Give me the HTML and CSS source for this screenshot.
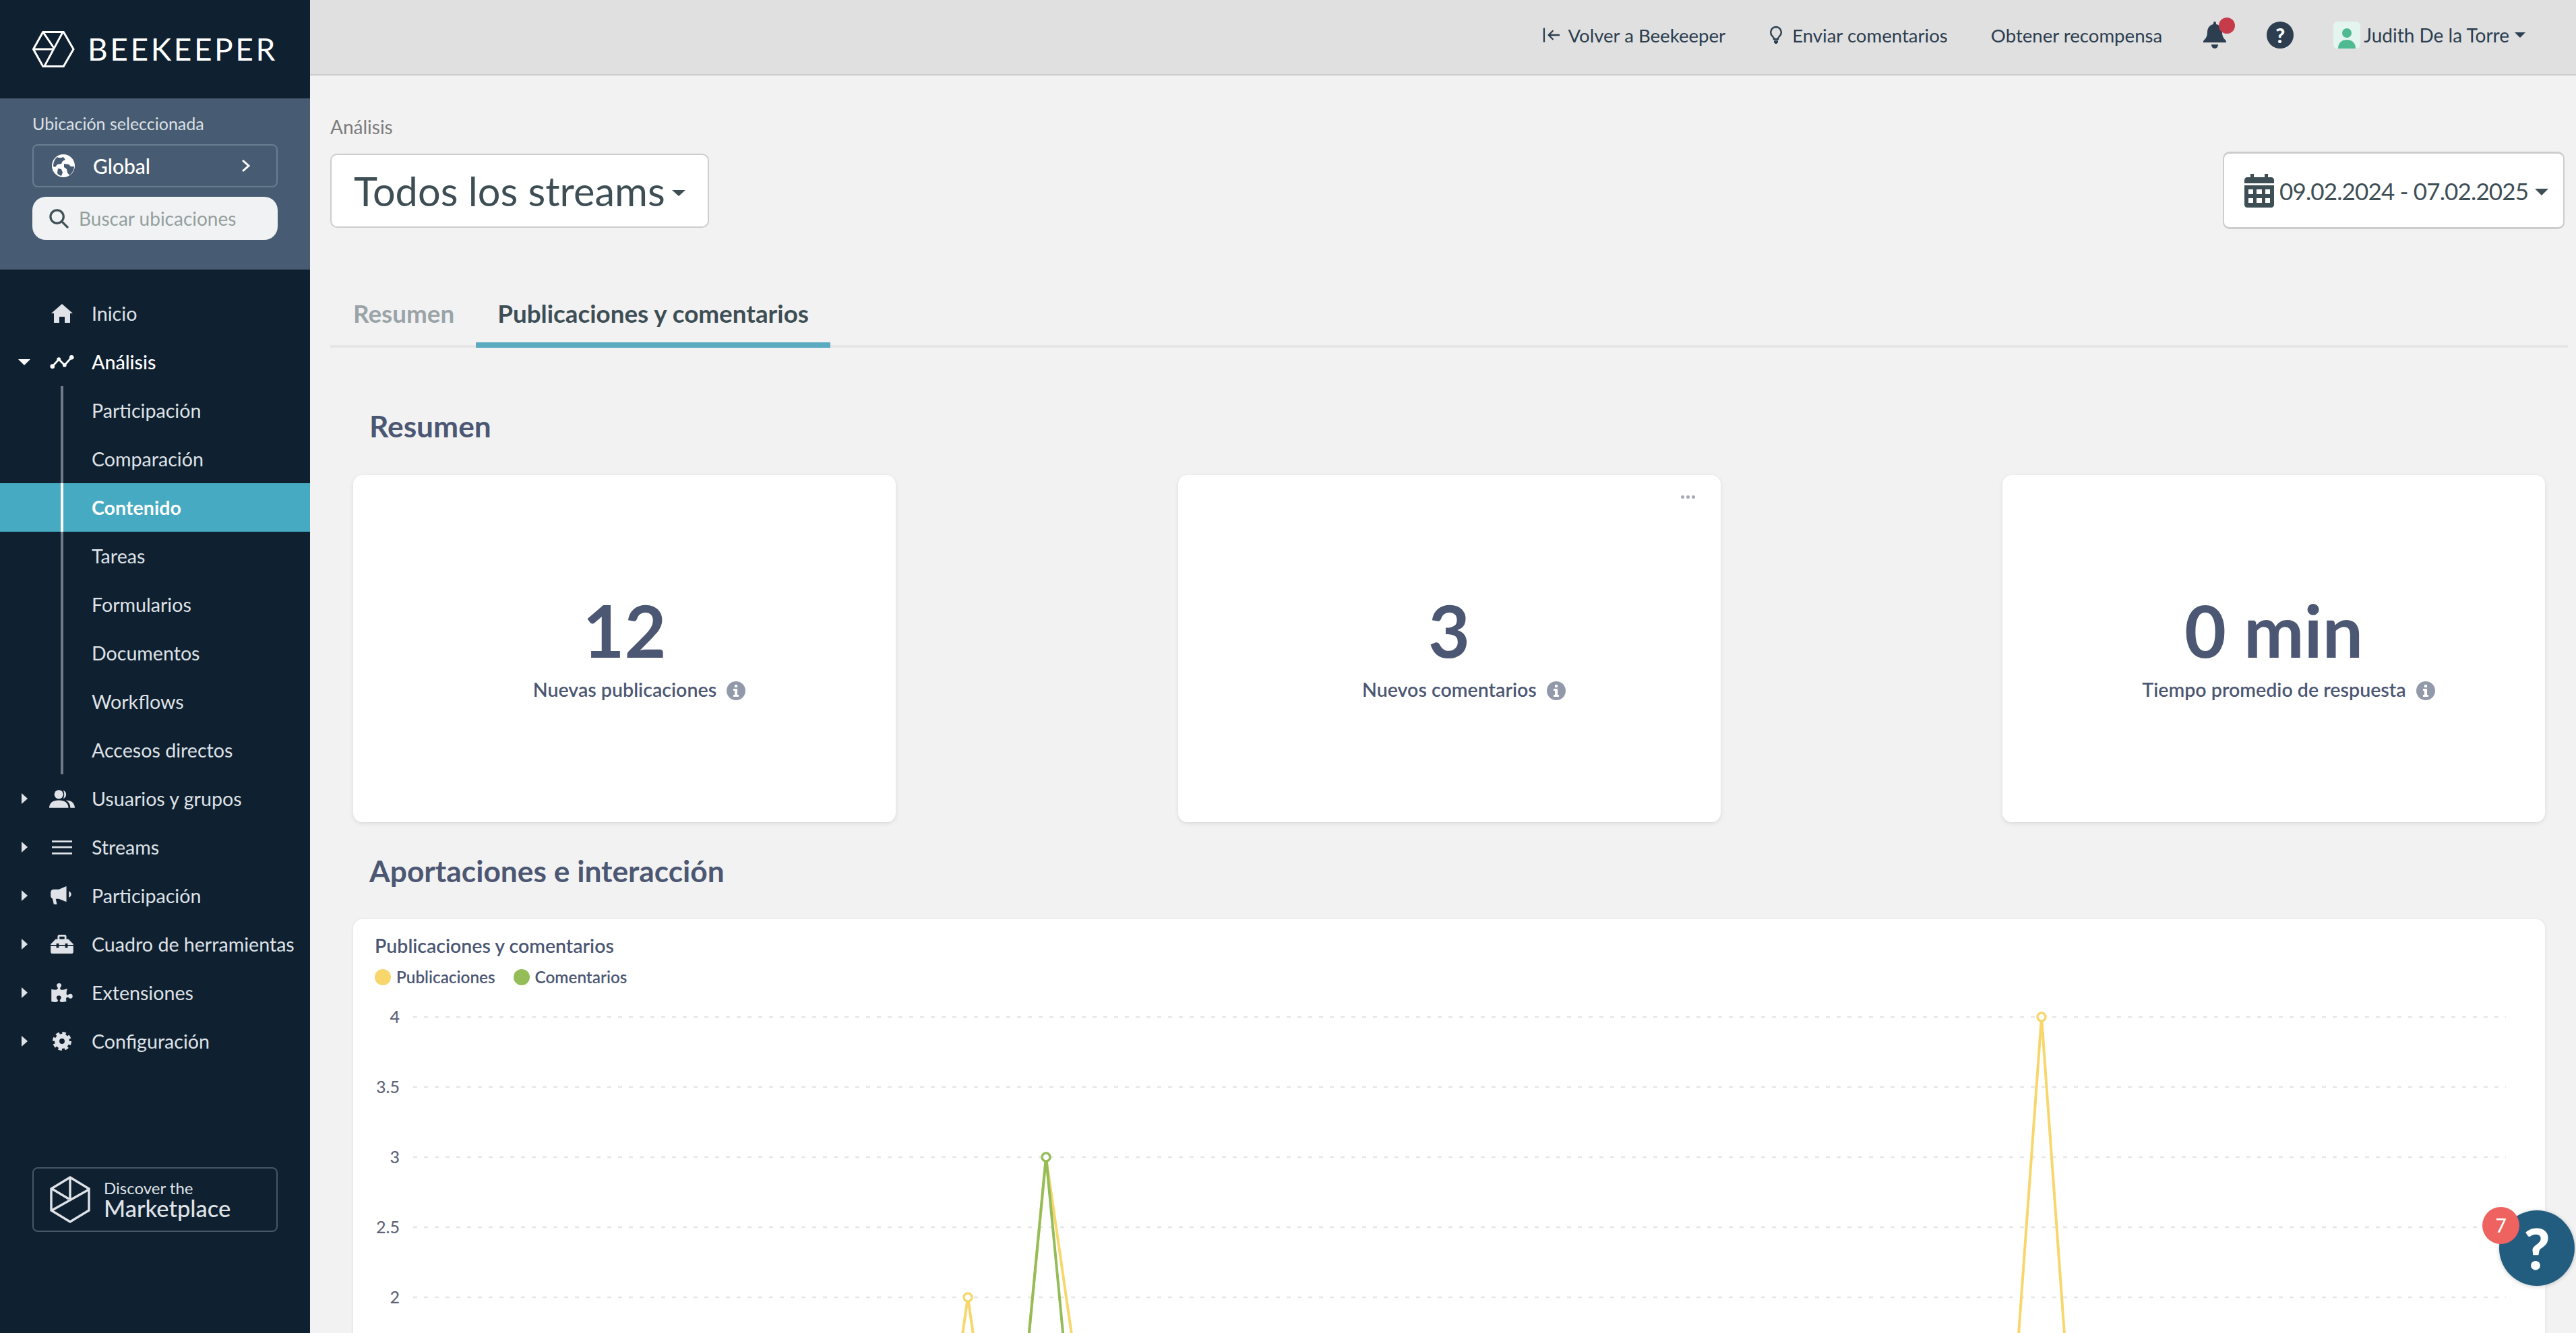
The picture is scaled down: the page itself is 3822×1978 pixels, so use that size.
FILE: index.html
```html
<!DOCTYPE html>
<html lang="es">
<head>
<meta charset="utf-8">
<title>Análisis</title>
<link rel="stylesheet" href="styles.css">
</head>
<body>
<div class="app">
  <aside class="sidebar">
    <div class="brand">
      <svg class="brand-logo" viewBox="0 0 64 56"><path d="M1.5 28 16 2h31l15 26-15 26H16zM16 2l17 25M46 2 18 54M2 28h30"/></svg>
      <span class="brand-name">BEEKEEPER</span>
    </div>
    <div class="location">
      <div class="location-label">Ubicación seleccionada</div>
      <div class="location-btn">
        <svg class="globe" viewBox="0 0 34 34"><circle cx="17" cy="17" r="17" fill="#fff"/><path class="cut" d="M8 4c3 2 7 1 9 0l3 4-4 2-2 4-6 1-3 4-3-1C2 12 4 7 8 4zM18 14l7 1 3 3 5 0c0 5-3 10-7 13l-3-4-1-5-4-3zM9 21l5 1 2 5-2 5c-4-1-6-3-6-5z"/></svg>
        <span class="global-name">Global</span>
        <svg class="chev" viewBox="0 0 14 20"><path d="M2 2l9 8-9 8"/></svg>
      </div>
      <div class="search">
        <svg class="search-ico" viewBox="0 0 30 30"><circle cx="12" cy="12" r="10"/><path d="M19 19l10 10"/></svg>
        <span>Buscar ubicaciones</span>
      </div>
    </div>
    <nav class="nav">
      <a class="row"><i></i><svg class="ico" viewBox="0 0 32 28"><path d="M16 0l16 14h-4v14h-8v-9h-8v9H4V14H0z"/></svg><span>Inicio</span></a>
      <a class="row open"><i class="caret-down"></i><svg class="ico" viewBox="0 0 38 22"><path class="ln" d="M4 18l10-11 9 9L34 4"/><circle cx="4" cy="18" r="3.5"/><circle cx="14" cy="7" r="3"/><circle cx="23" cy="16" r="3"/><circle cx="34" cy="4" r="3.5"/></svg><span>Análisis</span></a>
      <a class="row sub"><i></i><b></b><span>Participación</span></a>
      <a class="row sub"><i></i><b></b><span>Comparación</span></a>
      <a class="row sub active"><i></i><b></b><span>Contenido</span></a>
      <a class="row sub"><i></i><b></b><span>Tareas</span></a>
      <a class="row sub"><i></i><b></b><span>Formularios</span></a>
      <a class="row sub"><i></i><b></b><span>Documentos</span></a>
      <a class="row sub"><i></i><b></b><span>Workflows</span></a>
      <a class="row sub"><i></i><b></b><span>Accesos directos</span></a>
      <a class="row"><i class="caret-right"></i><svg class="ico ico-users" viewBox="0 0 40 28"><circle cx="15" cy="7" r="7"/><path d="M0 28c0-8 6-12 15-12s15 4 15 12z"/><path d="M22 0.5a7 7 0 0 1 0 13c2-4 2-9 0-13zM26 16c8 0 14 4 14 12h-7c0-5-2-9-7-12z"/></svg><span>Usuarios y grupos</span></a>
      <a class="row"><i class="caret-right"></i><svg class="ico ico-bars" viewBox="0 0 32 22"><path d="M0 0h32v3H0zM0 9h32v3H0zM0 19h32v3H0z"/></svg><span>Streams</span></a>
      <a class="row"><i class="caret-right"></i><svg class="ico" viewBox="0 0 36 30"><path d="M25 0v25L13 20H8l2 9H5l-2-9c-2-1-3-3-3-5V10c0-3 2-5 5-5h8zM29 8c5 2 5 8 0 10z"/></svg><span>Participación</span></a>
      <a class="row"><i class="caret-right"></i><svg class="ico" viewBox="0 0 36 30"><path d="M11 7V3c0-2 1-3 3-3h8c2 0 3 1 3 3v4h3l8 8v1H27v-2h-4v2H13v-2H9v2H0v-1l8-8zM14 3v4h8V3zM0 18h9v3h4v-3h10v3h4v-3h9v9c0 2-1 3-3 3H3c-2 0-3-1-3-3z"/></svg><span>Cuadro de herramientas</span></a>
      <a class="row"><i class="caret-right"></i><svg class="ico" viewBox="0 0 576 512"><path d="M519.442 288.651c-41.519 0-59.5 31.593-82.058 31.593C377.409 320.244 432 144 432 144s-196.288 80-196.288-3.297c0-35.827 36.288-46.25 36.288-85.985C272 19.216 243.885 0 210.539 0c-34.654 0-66.366 18.891-66.366 56.346 0 41.364 31.711 59.277 31.711 81.75C175.885 207.719 0 166.758 0 166.758v333.237s178.635 41.047 178.635-28.662c0-22.473-40-40.107-40-81.471 0-37.456 29.25-56.346 63.577-56.346 33.673 0 61.788 19.216 61.788 54.717 0 39.735-36.288 50.158-36.288 85.985 0 60.803 129.675 25.73 181.23 25.73 0 0-34.725-120.101 25.827-120.101 35.962 0 46.423 36.152 86.308 36.152C556.712 416 576 387.99 576 354.443c0-34.199-18.962-65.792-56.558-65.792z"/></svg><span>Extensiones</span></a>
      <a class="row"><i class="caret-right"></i><svg class="ico" viewBox="0 0 32 32"><circle class="gear-teeth" cx="16" cy="16" r="13.5"/><circle class="gear-ring" cx="16" cy="16" r="8.5"/></svg><span>Configuración</span></a>
    </nav>
    <div class="market">
      <svg class="market-logo" viewBox="0 0 62 70"><path d="M31 2l28 17v32L31 68 3 51V19zM31 2v33M4 19l25 15M59 20L4 51"/></svg>
      <div class="market-text"><span class="m1">Discover the</span><span class="m2">Marketplace</span></div>
    </div>
  </aside>

  <main class="main">
    <header class="topbar">
      <a class="top-link link-back"><svg class="t-ico t-back" viewBox="0 0 28 24"><path d="M2 1v22M26 12H9M16 5l-7 7 7 7"/></svg>Volver a Beekeeper</a>
      <a class="top-link link-send"><svg class="t-ico t-bulb" viewBox="0 0 20 28"><path d="M10 2a8 8 0 0 0-5 14c1 1 2 3 2 4h6c0-1 1-3 2-4a8 8 0 0 0-5-14z"/><path class="fill" d="M7 22h6v3l-2 2H9l-2-2z"/></svg>Enviar comentarios</a>
      <a class="top-link">Obtener recompensa</a>
      <span class="bell"><svg viewBox="0 0 36 40"><path d="M18 0c2 0 2 2 2 4 6 1 9 6 9 12 0 8 4 10 6 13v2H1v-2c2-3 6-5 6-13 0-6 3-11 9-12 0-2 0-4 2-4zM13 34h10c0 3-2 6-5 6s-5-3-5-6z"/></svg><em></em></span>
      <span class="help-ico">?</span>
      <span class="user"><svg class="avatar" viewBox="0 0 40 40"><rect width="40" height="40" rx="6" fill="#e3f5ee"/><circle cx="20" cy="17" r="7" fill="#4fba91"/><path d="M7 40c0-9 6-13 13-13s13 4 13 13z" fill="#4fba91"/></svg>Judith De la Torre<i class="drop"></i></span>
    </header>

    <section class="page">
      <div class="crumb">Análisis</div>
      <div class="page-head">
        <div class="stream-btn">Todos los streams<i class="drop"></i></div>
        <div class="date-btn">
          <svg class="cal" viewBox="0 0 44 50"><path d="M9 0h5v7H9zM30 0h5v7h-5zM4 5h36c2 0 4 2 4 4v5H0V9c0-2 2-4 4-4zM0 17h44v29c0 2-2 4-4 4H4c-2 0-4-2-4-4z"/><path class="cal-w" d="M6 23h7v7H6zM18 23h8v7h-8zM31 23h7v7h-7zM6 36h7v7H6zM18 36h8v7h-8zM31 36h7v7h-7z"/></svg>
          <span class="date-text">09.02.2024 - 07.02.2025</span><i class="drop"></i>
        </div>
      </div>
      <div class="tabs">
        <a class="tab">Resumen</a>
        <a class="tab current">Publicaciones y comentarios</a>
      </div>
      <div class="dash">
        <h2 class="sec sec-first">Resumen</h2>
        <div class="kpis">
          <div class="kpi">
            <div class="num">12</div>
            <div class="lbl">Nuevas publicaciones <svg class="info" viewBox="0 0 28 28"><circle cx="14" cy="14" r="14"/><path class="w" d="M12 5h4v4h-4zM10 11h6v9h2v3h-8v-3h2v-6h-2z"/></svg></div>
          </div>
          <div class="kpi">
            <span class="dots"><u></u><u></u><u></u></span>
            <div class="num">3</div>
            <div class="lbl">Nuevos comentarios <svg class="info" viewBox="0 0 28 28"><circle cx="14" cy="14" r="14"/><path class="w" d="M12 5h4v4h-4zM10 11h6v9h2v3h-8v-3h2v-6h-2z"/></svg></div>
          </div>
          <div class="kpi">
            <div class="num">0 min</div>
            <div class="lbl">Tiempo promedio de respuesta <svg class="info" viewBox="0 0 28 28"><circle cx="14" cy="14" r="14"/><path class="w" d="M12 5h4v4h-4zM10 11h6v9h2v3h-8v-3h2v-6h-2z"/></svg></div>
          </div>
        </div>
        <h2 class="sec sec-second">Aportaciones e interacción</h2>
        <div class="chart-card">
          <div class="chart-title">Publicaciones y comentarios</div>
          <div class="legend">
            <span class="lg"><em class="yel"></em>Publicaciones</span>
            <span class="lg"><em class="grn"></em>Comentarios</span>
          </div>
          <svg class="chart" viewBox="0 0 3252 540" width="3252" height="540">
            <g class="grid">
              <path d="M89 39H3194M89 143H3194M89 247H3194M89 351H3194M89 455H3194"/>
            </g>
            <g class="axis">
              <text x="69" y="48">4</text>
              <text x="69" y="152">3.5</text>
              <text x="69" y="256">3</text>
              <text x="69" y="360">2.5</text>
              <text x="69" y="464">2</text>
            </g>
            <path class="line l-y" d="M852 871L912 455L972 871M968 871L1028 247L1088 663M2445 871L2505 39L2565 871"/>
            <path class="line l-g" d="M968 871L1028 247L1088 871"/>
            <circle class="pt p-y" cx="912" cy="455" r="6"/>
            <circle class="pt p-y" cx="2505" cy="39" r="6"/>
            <circle class="pt p-g" cx="1028" cy="247" r="6"/>
          </svg>
        </div>
      </div>
    </section>
  </main>
</div>
<div class="help-fab"><span class="q">?</span><span class="badge">7</span></div>
</body>
</html>
```

FILE: styles.css
```css
* { box-sizing: border-box; }
html, body { margin: 0; height: 100%; overflow: hidden; }
body { font-family: "Lato", "Noto Sans", sans-serif; background: #f2f2f2; color: #3e4e55; }
a { color: inherit; text-decoration: none; }
.app { display: flex; height: 1978px; }

/* sidebar */
.sidebar { width: 460px; flex: none; background: #0f2030; color: #dfe2e7; font-size: 28.6px; }
.brand { height: 146px; display: flex; align-items: center; padding-left: 48px; gap: 19px; }
.brand-logo { width: 63px; height: 56px; fill: none; stroke: #fff; stroke-width: 3; }
.brand-name { font-size: 46px; font-weight: 400; letter-spacing: 3.6px; color: #fff; line-height: 1; }
.location { height: 254px; background: #475c72; padding: 19px 48px 0; }
.location-label { font-size: 25px; line-height: 36px; color: #dde1e6; margin-bottom: 13px; }
.location-btn { height: 64px; border: 2px solid #6a7d90; border-radius: 8px; display: flex; align-items: center; padding-left: 27px; color: #fff; font-size: 30px; font-weight: 500; }
.globe { width: 34px; height: 34px; flex: none; }
.cut { fill: #475c72; }
.global-name { margin-left: 27px; flex: 1; }
.chev { width: 14px; height: 20px; fill: none; stroke: #fff; stroke-width: 3; margin-right: 38px; }
.search { height: 64px; margin-top: 14px; background: #f0f2f4; border-radius: 20px; display: flex; align-items: center; padding-left: 25px; gap: 15px; font-size: 28px; color: #949f9d; }
.search-ico { width: 29px; height: 29px; fill: none; stroke: #3f5056; stroke-width: 3.4; flex: none; }
.nav { margin-top: 29px; }
.row { height: 72px; display: grid; grid-template-columns: 72px 40px 1fr; align-items: center; position: relative; white-space: nowrap; }
.row span { padding-left: 24px; position: relative; }
.row i { justify-self: center; width: 0; height: 0; }
.caret-right { border-left: 9px solid #dfe2e7; border-top: 8px solid transparent; border-bottom: 8px solid transparent; }
.caret-down { border-top: 9px solid #fff; border-left: 9px solid transparent; border-right: 9px solid transparent; }
.ico { width: 34px; height: 28px; justify-self: center; fill: #dfe2e7; }
.ico-users { width: 38px; height: 27px; }
.ico-bars { width: 30px; height: 21px; }
.ln { fill: none; stroke: #fff; stroke-width: 3; }
.open { color: #fff; font-weight: 500; }
.open .ico { fill: #fff; width: 36px; height: 22px; }
.gear-teeth { fill: none; stroke: #dfe2e7; stroke-width: 5; stroke-dasharray: 6 4.6; }
.gear-ring { fill: none; stroke: #dfe2e7; stroke-width: 8; }
.row b { position: absolute; left: 90px; top: 0; bottom: 0; width: 4px; background: #6f7b88; }
.sub span { grid-column: 3; }
.active { background: #46aac2; color: #fff; font-weight: 700; }
.active b { background: #fff; }
.market { margin: 151px 48px 0; height: 96px; border: 2px solid #47566a; border-radius: 8px; display: flex; align-items: center; padding-left: 23px; gap: 19px; }
.market-logo { width: 62px; height: 70px; fill: none; stroke: #dfe2e7; stroke-width: 3.4; flex: none; }
.market-text { display: flex; flex-direction: column; }
.m1 { font-size: 24px; line-height: 26px; }
.m2 { font-size: 34.5px; line-height: 34px; font-weight: 500; }

/* main */
.main { flex: 1; min-width: 0; }
.topbar { height: 112px; background: #e0e0e0; border-bottom: 2px solid #cccccc; display: flex; justify-content: flex-end; align-items: center; padding: 0 75px 6px 0; color: #2c3e50; font-size: 28px; }
.top-link { display: flex; align-items: center; margin-right: 60px; font-size: 27.6px; }
.link-send { margin-right: 64px; }
.link-back { margin-right: 65px; }
.t-ico { fill: none; stroke: #2c3e50; stroke-width: 2.4; margin-right: 10px; }
.t-back { width: 27px; height: 24px; }
.t-bulb { width: 20px; height: 28px; margin-right: 14px; }
.t-bulb .fill { fill: #2c3e50; stroke: none; }
.bell { width: 36px; height: 40px; position: relative; margin-right: 59px; }
.bell svg { width: 36px; height: 40px; fill: #2c3e50; display: block; }
.bell em { position: absolute; left: 24px; top: -6px; width: 24px; height: 24px; border-radius: 50%; background: #c63b49; }
.help-ico { width: 40px; height: 40px; border-radius: 50%; background: #2c3e50; color: #fff; font-weight: 900; font-size: 30px; line-height: 40px; text-align: center; margin-right: 59px; }
.user { display: flex; align-items: center; }
.avatar { width: 40px; height: 40px; margin-right: 5px; }
.drop { display: inline-block; width: 0; height: 0; border-top: 8px solid currentColor; border-left: 8px solid transparent; border-right: 8px solid transparent; margin-left: 8px; }

.page { padding: 60px 12px 0 30px; }
.crumb { font-size: 28px; line-height: 32px; color: #7c7c7c; margin-bottom: 21px; }
.page-head { display: flex; justify-content: space-between; align-items: center; height: 115px; padding-right: 5px; }
.stream-btn { width: 562px; height: 110px; background: #fff; border: 2px solid #cdcdcd; border-radius: 10px; display: flex; align-items: center; padding-left: 33px; font-size: 59.5px; }
.stream-btn .drop { margin-left: 10px; margin-top: 8px; border-top-width: 9px; border-left-width: 10px; border-right-width: 10px; }
.date-btn { width: 507px; height: 115px; background: #fff; border: 2px solid #cdcdcd; border-top-width: 3px; border-bottom-width: 3px; border-radius: 10px; display: flex; align-items: center; padding-left: 30px; font-size: 35px; white-space: nowrap; }
.cal { width: 44px; height: 50px; fill: #3e4e55; flex: none; margin-right: 8px; }
.cal-w { fill: #fff; }
.date-text { letter-spacing: -0.85px; }
.date-btn .drop { margin-left: 10px; margin-top: 4px; border-top-width: 10px; border-left-width: 10px; border-right-width: 10px; }
.tabs { margin-top: 76px; display: flex; border-bottom: 4px solid #e6e6e6; height: 100px; padding-left: 2px; }
.tab { padding: 0 32px; font-size: 36.8px; font-weight: 700; color: #9aa4a8; line-height: 98px; position: relative; }
.current { color: #3e4e55; }
.current::after { content: ""; position: absolute; left: 0; right: 0; bottom: -4px; height: 8px; background: #5aabc0; }

.dash { padding: 0 34px; }
.sec { margin: 0; font-size: 44.3px; font-weight: 700; color: #4c5773; padding-left: 24px; line-height: 60px; }
.sec-first { margin-top: 86px; }
.sec-second { margin-top: 42px; }
.kpis { display: flex; justify-content: space-between; margin-top: 43px; }
.kpi { width: 805px; height: 515px; background: #fff; border-radius: 14px; box-shadow: 0 2px 6px rgba(0,0,0,.1); position: relative; text-align: center; padding-top: 165px; color: #4c5773; }
.num { font-size: 107px; font-weight: 700; line-height: 130px; }
.lbl { font-size: 28.6px; font-weight: 600; line-height: 36px; margin-top: 5px; padding-left: 44px; }
.info { width: 28px; height: 28px; fill: #9299ab; vertical-align: -5px; margin-left: 8px; }
.info .w { fill: #fff; }
.dots { position: absolute; right: 38px; top: 30px; display: flex; gap: 3px; }
.dots u { width: 5px; height: 5px; border-radius: 50%; background: #a6a9b3; }

.chart-card { margin-top: 42px; height: 900px; background: #fff; border-radius: 14px; box-shadow: 0 1px 5px rgba(0,0,0,.08); }
.chart-title { padding: 21px 0 0 32px; font-size: 28.5px; font-weight: 600; line-height: 36px; color: #4c5773; }
.legend { display: flex; padding: 13px 0 0 32px; gap: 27px; font-size: 24.3px; font-weight: 600; color: #4c5773; line-height: 32px; }
.lg { display: flex; align-items: center; gap: 8px; }
.lg em { width: 24px; height: 24px; border-radius: 50%; }
.yel { background: #f7d76b; }
.grn { background: #94bc57; }
.chart { display: block; margin-top: 4px; }
.grid path { stroke: #e6e6e6; stroke-width: 2.5; stroke-dasharray: 6 10; fill: none; }
.axis text { font-family: "Lato", sans-serif; font-size: 25px; font-weight: 500; fill: #5e6478; text-anchor: end; }
.line { fill: none; stroke-width: 4; }
.l-y { stroke: #f7d76b; }
.l-g { stroke: #94bc57; }
.pt { fill: #fff; stroke-width: 3.5; }
.p-y { stroke: #f7d76b; }
.p-g { stroke: #94bc57; }

.help-fab { position: absolute; left: 3708px; top: 1796px; width: 112px; height: 112px; border-radius: 50%; background: #225c7f; box-shadow: 0 1px 6px rgba(0,0,0,.2); color: #fff; text-align: center; }
.q { font-family: "Lato", sans-serif; font-size: 84px; font-weight: 900; line-height: 112px; }
.badge { position: absolute; left: -25px; top: -5px; width: 55px; height: 55px; border-radius: 50%; background: #ee6360; font-size: 28px; line-height: 55px; font-weight: 500; }
```
